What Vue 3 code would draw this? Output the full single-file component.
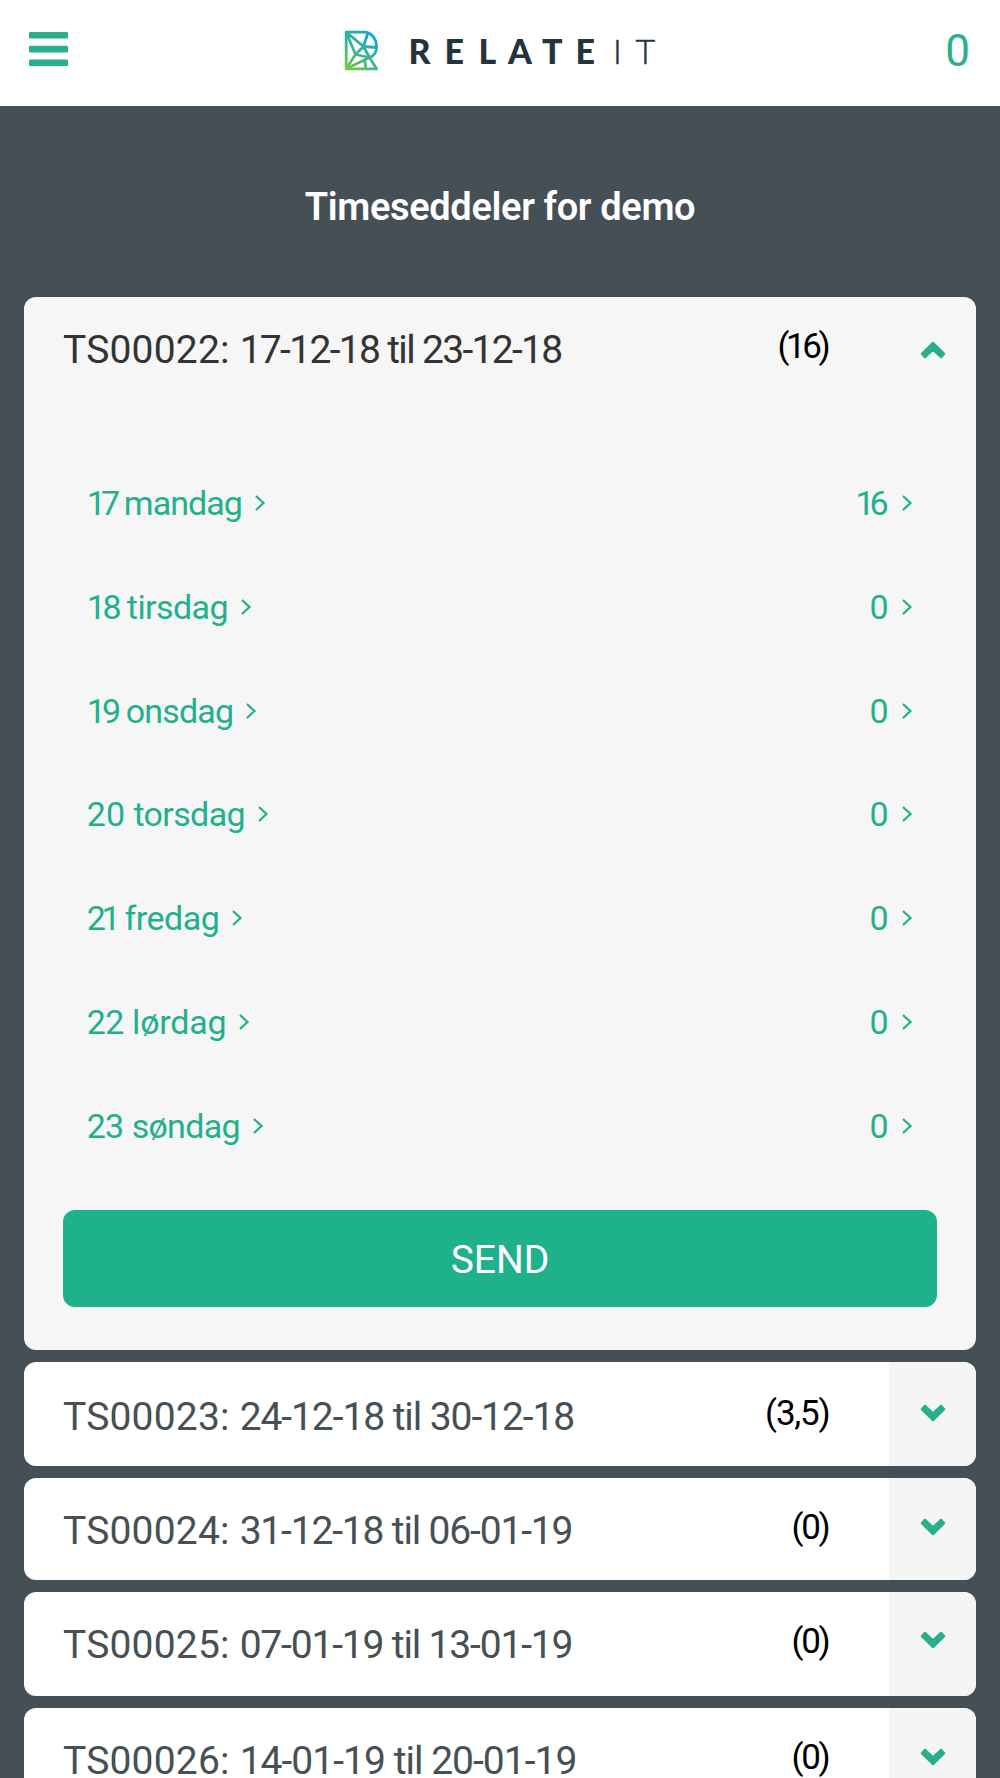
<script setup>
import { ref } from 'vue';

const total = ref(0);

const days = ref([
  { date: '17', name: 'mandag', hours: '16', dateSpace: -4.8, nameSpace: -0.95, hoursSpace: -5 },
  { date: '18', name: 'tirsdag', hours: '0', dateSpace: -3.3, nameSpace: -0.6, hoursSpace: 0 },
  { date: '19', name: 'onsdag', hours: '0', dateSpace: -3.9, nameSpace: -0.8, hoursSpace: 0 },
  { date: '20', name: 'torsdag', hours: '0', dateSpace: 0, nameSpace: -0.65, hoursSpace: 0 },
  { date: '21', name: 'fredag', hours: '0', dateSpace: -4.5, nameSpace: -0.5, hoursSpace: 0 },
  { date: '22', name: 'lørdag', hours: '0', dateSpace: -0.7, nameSpace: -0.2, hoursSpace: 0 },
  { date: '23', name: 'søndag', hours: '0', dateSpace: -0.9, nameSpace: -0.7, hoursSpace: 0 }
]);

const sheets = ref([
  { id: 'TS00022', period: '17-12-18 til 23-12-18', sum: '16', size: 'open', space: -1.68, sumSpace: -3.4 },
  { id: 'TS00023', period: '24-12-18 til 30-12-18', sum: '3,5', size: 'first', space: -1.08, sumSpace: -1.2 },
  { id: 'TS00024', period: '31-12-18 til 06-01-19', sum: '0', size: 'short', space: -1.17, sumSpace: -2.3 },
  { id: 'TS00025', period: '07-01-19 til 13-01-19', sum: '0', size: 'tall', space: -1.17, sumSpace: -2.3 },
  { id: 'TS00026', period: '14-01-19 til 20-01-19', sum: '0', size: 'tall', space: -0.97, sumSpace: -2.3 }
]);

const opened = ref('TS00022');

// the spacing after the last character is given back as padding
const spacing = (value) => ({
  letterSpacing: value + 'px',
  paddingRight: -value + 'px'
});
</script>

<template>
  <div class="page">
    <header class="topbar">
      <svg class="burger" width="39" height="34" viewBox="0 0 39 34">
        <rect width="39" height="6.6" rx="1.2" />
        <rect y="13.8" width="39" height="6.6" rx="1.2" />
        <rect y="27.4" width="39" height="6.6" rx="1.2" />
      </svg>
      <svg class="logo" width="320" height="50" viewBox="0 0 320 50">
        <defs>
          <linearGradient id="mark" gradientUnits="userSpaceOnUse" x1="5" y1="45" x2="32" y2="8">
            <stop offset="0" stop-color="#86c440" />
            <stop offset="0.45" stop-color="#3fb88a" />
            <stop offset="1" stop-color="#10a4d8" />
          </linearGradient>
        </defs>
        <g fill="none" stroke="url(#mark)" stroke-width="2.8" stroke-linejoin="round">
          <path d="M6.2 7.2H26C33 9 36.6 15 36.6 21.5C36.6 27 34 31 29.5 32.5L36.6 43.8H6.2Z" />
          <path d="M6.2 7.2L23.5 21.5L28 7.5M23.5 21.5L36.5 22.5M23.5 21.5L15.5 29.5L29.5 32.5L23.5 21.5M6.2 7.2L15.5 29.5L6.2 43.8L29.5 32.5M24.5 35L26 43.5" />
        </g>
        <text class="logo-bold" x="68.5 104.5 138.5 168 202 235.5" y="39">RELATE</text>
        <text class="logo-thin" x="273 295.5" y="39">IT</text>
      </svg>
      <span class="total">{{ total }}</span>
    </header>

    <h1>Timeseddeler for demo</h1>

    <main class="sheets">
      <section v-for="sheet in sheets" :key="sheet.id" class="card" :class="sheet.size">
        <div class="card-head">
          <span class="label">{{ sheet.id }}: <span :style="{ letterSpacing: sheet.space + 'px' }">{{ sheet.period }}</span></span>
          <span class="sum" :style="spacing(sheet.sumSpace)">({{ sheet.sum }})</span>
          <span class="toggle">
            <svg width="26" height="18" viewBox="0 0 26 18">
              <path v-if="sheet.id === opened" d="M13 1.8L24.2 12.7L21 16.2L13 8.7L5 16.2L1.8 12.7Z" />
              <path v-else d="M13 16.2L24.2 5.3L21 1.8L13 9.3L5 1.8L1.8 5.3Z" />
            </svg>
          </span>
        </div>
        <template v-if="sheet.id === opened">
          <ul class="days">
            <li v-for="day in days" :key="day.date">
              <a class="day">
                <span><span :style="{ letterSpacing: day.dateSpace + 'px' }">{{ day.date }}</span>&nbsp;<span :style="{ letterSpacing: day.nameSpace + 'px' }">{{ day.name }}</span></span>
                <svg width="12" height="18" viewBox="0 0 12 18"><path d="M2 2L9.5 9L2 16" /></svg>
              </a>
              <a class="day">
                <span :style="spacing(day.hoursSpace)">{{ day.hours }}</span>
                <svg width="12" height="18" viewBox="0 0 12 18"><path d="M2 2L9.5 9L2 16" /></svg>
              </a>
            </li>
          </ul>
          <button class="send">SEND</button>
        </template>
      </section>
    </main>
  </div>
</template>

<style>
body {
  background: #455056;
  overflow: hidden;
}
</style>

<style scoped>
.page {
  height: 1778px;
  overflow: hidden;
  background: #455056;
  font-family: Roboto, "Liberation Sans", sans-serif;
}

.topbar {
  display: flex;
  align-items: flex-start;
  justify-content: space-between;
  box-sizing: border-box;
  height: 106.3px;
  padding: 0 30px 0 29px;
  background: #fff;
}

.burger {
  margin-top: 32px;
  fill: #29af8c;
}

.logo {
  margin-top: 25px;
  margin-left: -13px;
}

.logo-bold {
  font: 900 34px Lato, sans-serif;
  fill: #25343c;
}

.logo-thin {
  font: 300 34px Lato, sans-serif;
  fill: #25343c;
  stroke: #25343c;
  stroke-width: 0.5;
}

.total {
  color: #29af8c;
  font-size: 44px;
  line-height: 103px;
}

h1 {
  margin: 0;
  height: 190.7px;
  color: #fff;
  font-size: 38px;
  font-weight: 600;
  line-height: 203px;
  letter-spacing: -0.35px;
  text-align: center;
}

.sheets {
  display: flex;
  flex-direction: column;
  gap: 12px;
  padding: 0 24.3px;
}

.card {
  flex: none;
  overflow: hidden;
  border-radius: 12px;
  background: #fff;
}

.card.open {
  height: 1053.3px;
  background: #f6f6f6;
}

.card.first,
.card.tall {
  height: 104.2px;
}

.card.short {
  height: 101.5px;
}

.card-head {
  display: flex;
  align-items: flex-start;
  height: 100%;
  padding-left: 38.7px;
}

.open .card-head {
  height: 134px;
}

.label {
  flex: 1;
  color: #465055;
  font-size: 39px;
  line-height: 107px;
  letter-spacing: 0.2px;
  white-space: nowrap;
}

.open .label {
  color: #333;
}

.sum {
  color: #000;
  font-size: 35px;
  line-height: 99px;
  margin-right: 58px;
}

.toggle {
  display: flex;
  justify-content: center;
  box-sizing: border-box;
  width: 87px;
  height: 100%;
  padding: 39.5px 0 0 2px;
  background: #f5f5f5;
}

.first .label {
  line-height: 111px;
}

.first .sum {
  line-height: 104px;
}

.first .toggle {
  padding-top: 41.5px;
}

.open .toggle {
  padding-top: 44.5px;
  background: none;
}

.toggle path {
  fill: #29af8c;
  stroke: #29af8c;
  stroke-width: 2.2;
  stroke-linejoin: round;
}

.days {
  margin: 0;
  padding: 20px 63px 0 62.5px;
  list-style: none;
}

.days li {
  display: flex;
  justify-content: space-between;
  height: 103.8px;
}

.day {
  display: flex;
  align-items: flex-start;
  gap: 12px;
  color: #1fb08c;
  font-size: 34px;
  line-height: 104px;
}

.day svg {
  margin-top: 43px;
  fill: none;
  stroke: #1fb08c;
  stroke-width: 2.2;
}

.send {
  display: block;
  width: 874px;
  height: 96.5px;
  margin: 32.5px auto 0;
  padding: 4px 0 0;
  border: none;
  border-radius: 12px;
  background: #1fb08c;
  color: #fff;
  font-family: inherit;
  font-size: 39px;
}
</style>
